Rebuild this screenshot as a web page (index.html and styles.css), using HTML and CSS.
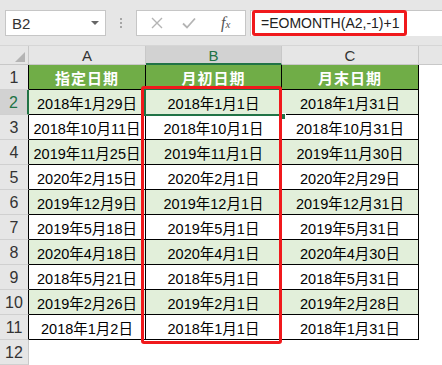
FILE: index.html
```html
<!DOCTYPE html>
<html lang="zh">
<head>
  <meta charset="UTF-8">
  <title>EOMONTH</title>
  <link rel="stylesheet" href="styles.css">
</head>
<body>

  <div class="toolbar">
    <div class="namebox">
      <span>B2</span>
      <span class="caret"></span>
    </div>
    <div class="grip"><i></i><i></i><i></i></div>
    <div class="fxbox">
      <svg class="btn-icon" width="12" height="12" viewBox="0 0 12 12"><path d="M1 1L11 11M11 1L1 11" stroke="#b4b4b4" stroke-width="1.4" fill="none"/></svg>
      <svg class="btn-icon" width="14" height="12" viewBox="0 0 14 12"><path d="M1 6.5L5 10.5L13 1.5" stroke="#b4b4b4" stroke-width="1.8" fill="none"/></svg>
      <span class="fx">f<small>x</small></span>
    </div>
    <div class="formula">
      <span class="formula-text">=EOMONTH(A2,-1)+1</span>
    </div>
  </div>

  <div class="sheet">
    <div class="corner"><span class="corner-tri"></span></div>
    <div class="colhead">A</div>
    <div class="colhead sel">B</div>
    <div class="colhead">C</div>
    <div class="colhead rest"></div>

    <div class="rowhead">1</div>
    <div class="cell head">指定日期</div>
    <div class="cell head">月初日期</div>
    <div class="cell head">月末日期</div>
    <div class="blank"></div>

    <div class="rowhead sel">2</div>
    <div class="cell alt">2018年1月29日</div>
    <div class="cell alt">2018年1月1日</div>
    <div class="cell alt">2018年1月31日</div>
    <div class="blank"></div>

    <div class="rowhead">3</div>
    <div class="cell">2018年10月11日</div>
    <div class="cell">2018年10月1日</div>
    <div class="cell">2018年10月31日</div>
    <div class="blank"></div>

    <div class="rowhead">4</div>
    <div class="cell alt">2019年11月25日</div>
    <div class="cell alt">2019年11月1日</div>
    <div class="cell alt">2019年11月30日</div>
    <div class="blank"></div>

    <div class="rowhead">5</div>
    <div class="cell">2020年2月15日</div>
    <div class="cell">2020年2月1日</div>
    <div class="cell">2020年2月29日</div>
    <div class="blank"></div>

    <div class="rowhead">6</div>
    <div class="cell alt">2019年12月9日</div>
    <div class="cell alt">2019年12月1日</div>
    <div class="cell alt">2019年12月31日</div>
    <div class="blank"></div>

    <div class="rowhead">7</div>
    <div class="cell">2019年5月18日</div>
    <div class="cell">2019年5月1日</div>
    <div class="cell">2019年5月31日</div>
    <div class="blank"></div>

    <div class="rowhead">8</div>
    <div class="cell alt">2020年4月18日</div>
    <div class="cell alt">2020年4月1日</div>
    <div class="cell alt">2020年4月30日</div>
    <div class="blank"></div>

    <div class="rowhead">9</div>
    <div class="cell">2018年5月21日</div>
    <div class="cell">2018年5月1日</div>
    <div class="cell">2018年5月31日</div>
    <div class="blank"></div>

    <div class="rowhead">10</div>
    <div class="cell alt">2019年2月26日</div>
    <div class="cell alt">2019年2月1日</div>
    <div class="cell alt">2019年2月28日</div>
    <div class="blank"></div>

    <div class="rowhead">11</div>
    <div class="cell">2018年1月2日</div>
    <div class="cell">2018年1月1日</div>
    <div class="cell">2018年1月31日</div>
    <div class="blank"></div>

    <div class="rowhead last">12</div>

    <div class="active-cell"></div>
    <div class="fill-handle"></div>
    <div class="mark"></div>
  </div>

</body>
</html>
```

FILE: styles.css
```css
body {
  margin: 0;
  width: 442px;
  height: 365px;
  overflow: hidden;
  background: #fff;
  font-family: "Liberation Sans", "Noto Sans CJK SC", sans-serif;
  color: #000;
}

/* formula bar */
.toolbar {
  height: 46px;
  box-sizing: border-box;
  padding: 10px 0 0 5px;
  background: #e6e6e6;
  border-bottom: 1px solid #d6d6d6;
  display: flex;
  align-items: flex-start;
}

.namebox {
  width: 101px;
  height: 26px;
  box-sizing: border-box;
  background: #fff;
  border: 1px solid #c6c6c6;
  display: flex;
  align-items: center;
  justify-content: space-between;
  padding: 0 6px 0 6px;
  font-size: 15px;
  color: #333;
}

.caret {
  width: 0;
  height: 0;
  border-left: 4px solid transparent;
  border-right: 4px solid transparent;
  border-top: 4px solid #666;
}

.grip {
  width: 3px;
  margin: 0 13px 0 14px;
  height: 26px;
  display: flex;
  flex-direction: column;
  justify-content: center;
  gap: 2px;
}

.grip i {
  width: 2px;
  height: 2px;
  background: #a6a6a6;
}

.fxbox {
  width: 110px;
  height: 26px;
  box-sizing: border-box;
  background: #fff;
  border: 1px solid #c6c6c6;
  display: flex;
  align-items: center;
  padding-left: 14px;
  gap: 19px;
}

.fx {
  font-family: "Liberation Serif", serif;
  font-style: italic;
  font-size: 16px;
  color: #555;
  margin-left: 6px;
}

.fx small {
  font-size: 11px;
}

.formula {
  flex: 1;
  height: 26px;
  margin-left: 4px;
  background: #fff;
  border-left: 1px solid #c6c6c6;
  border-top: 1px solid #c6c6c6;
  box-sizing: border-box;
  display: flex;
}

.formula-text {
  width: 155px;
  height: 26px;
  margin: -1px 0 0 1px;
  box-sizing: border-box;
  border: 3px solid #f0191c;
  border-radius: 3px;
  padding-left: 6px;
  font-size: 14px;
  line-height: 20px;
  color: #222;
  white-space: nowrap;
}

/* sheet grid */
.sheet {
  position: relative;
  display: grid;
  grid-template-columns: 29px 117px 136px 137px 1fr;
  grid-template-rows: 19px repeat(12, 25px);
}

.corner {
  background: #e6e6e6;
  border-right: 1px solid #c8c8c8;
  border-bottom: 1px solid #c8c8c8;
  position: relative;
}

.corner-tri {
  position: absolute;
  right: 3px;
  bottom: 2px;
  width: 0;
  height: 0;
  border-left: 10px solid transparent;
  border-bottom: 10px solid #b4b4b4;
}

.colhead {
  background: #e6e6e6;
  border-right: 1px solid #c8c8c8;
  border-bottom: 1px solid #c8c8c8;
  font-size: 15px;
  color: #333;
  display: flex;
  align-items: center;
  justify-content: center;
  padding-top: 1px;
}

.colhead.sel {
  background: #d2d2d2;
  color: #217346;
  border-bottom: 2px solid #217346;
}

.colhead.rest {
  border-right: none;
}

.rowhead {
  grid-column: 1;
  background: #e6e6e6;
  border-right: 1px solid #000;
  border-bottom: 1px solid #d0d0d0;
  font-size: 16px;
  color: #333;
  display: flex;
  align-items: center;
  justify-content: center;
  padding-top: 2px;
}

.rowhead.sel {
  background: #d2d2d2;
  color: #217346;
  border-right: 2px solid #217346;
}

.rowhead.last {
  border-right: 1px solid #c8c8c8;
}

.cell {
  border-right: 1px solid #000;
  border-bottom: 1px solid #000;
  font-size: 14.5px;
  display: flex;
  align-items: center;
  justify-content: center;
  white-space: nowrap;
  padding-top: 1px;
}

.cell.head {
  background: #70ad47;
  color: #fff;
  font-size: 15px;
  font-weight: bold;
  letter-spacing: 1px;
}

.cell.alt {
  background: #e2efda;
}

/* overlays */
.active-cell {
  position: absolute;
  left: 144px;
  top: 42px;
  width: 138px;
  height: 28px;
  box-sizing: border-box;
  border: 2px solid #217346;
}

.fill-handle {
  position: absolute;
  left: 279px;
  top: 67px;
  width: 5px;
  height: 5px;
  background: #217346;
  border: 1px solid #fff;
}

.mark {
  position: absolute;
  left: 141px;
  top: 40px;
  width: 141px;
  height: 258px;
  box-sizing: border-box;
  border: 3px solid #f0191c;
  border-radius: 3px;
}
```
